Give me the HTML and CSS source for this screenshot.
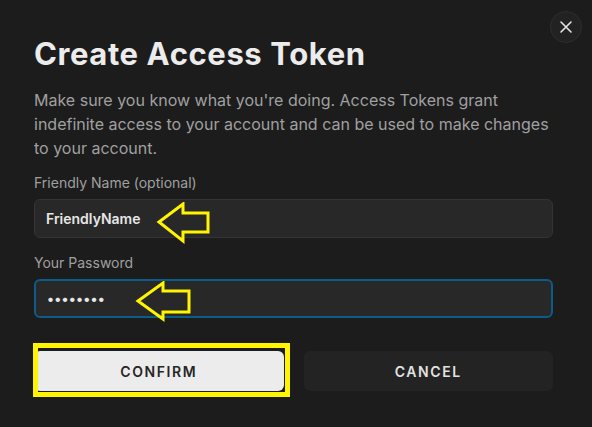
FILE: index.html
```html
<!DOCTYPE html>
<html>
<head>
<meta charset="utf-8">
<link rel="stylesheet" href="styles.css">
</head>
<body>
<div class="dialog">
  <button class="close" aria-label="Close">
    <svg width="14" height="14" viewBox="0 0 14 14"><path d="M2 2 L12 12 M12 2 L2 12" stroke="#e4e4e4" stroke-width="1.6" stroke-linecap="round" fill="none"/></svg>
  </button>
  <h1 class="title">Create Access Token</h1>
  <p class="desc">Make sure you know what you're doing. Access Tokens grant indefinite access to your account and can be used to make changes to your account.</p>
  <label class="label">Friendly Name (optional)</label>
  <input class="field" type="text" value="FriendlyName">
  <label class="label label-2">Your Password</label>
  <input class="field field-focus" type="password" value="password">
  <div class="actions">
    <button class="btn btn-confirm">CONFIRM</button>
    <button class="btn btn-cancel">CANCEL</button>
  </div>

  <svg class="arrow arrow-1" width="56" height="44" viewBox="0 0 56 44"><path d="M3 20 L27 2 L27 11 L52 11 L52 30 L27 30 L27 39 Z" fill="none" stroke="#fff500" stroke-width="3" stroke-linejoin="miter"/></svg>
  <svg class="arrow arrow-2" width="60" height="44" viewBox="0 0 60 44"><path d="M3 20 L28 2 L28 10 L54 10 L54 31 L28 31 L28 38 Z" fill="none" stroke="#fff500" stroke-width="3" stroke-linejoin="miter"/></svg>
  <div class="highlight"></div>
</div>
</body>
</html>
```
FILE: styles.css
```css
* { box-sizing: border-box; }
html, body {
  margin: 0;
  padding: 0;
  background: #1c1c1c;
  width: 592px;
  height: 427px;
  overflow: hidden;
}
body {
  font-family: Inter, "Noto Sans", sans-serif;
}
.dialog {
  position: relative;
  width: 592px;
  height: 427px;
  padding: 36px 39px 0 34px;
  display: flex;
  flex-direction: column;
}
.close {
  position: absolute;
  top: 11px;
  right: 10px;
  width: 32px;
  height: 32px;
  border-radius: 50%;
  background: #222222;
  border: 1px solid #2e2e2e;
  display: flex;
  align-items: center;
  justify-content: center;
  padding: 0;
}
.title {
  margin: 0;
  font-size: 31px;
  line-height: 36px;
  font-weight: 700;
  color: #ececec;
  letter-spacing: 0.6px;
}
.desc {
  margin: 16px 0 0 0;
  font-size: 16px;
  line-height: 24px;
  color: #a0a0a0;
}
.label {
  display: block;
  margin-top: 13px;
  font-size: 14px;
  line-height: 20px;
  color: #a0a0a0;
}
.label-2 { margin-top: 15px; }
.field {
  display: block;
  margin-top: 6px;
  width: 519px;
  height: 39px;
  border-radius: 6px;
  background: #282828;
  border: 1px solid #343434;
  padding: 0 11px;
  font-family: Inter, "Noto Sans", sans-serif;
  font-size: 14px;
  font-weight: 600;
  color: #e6e6e6;
  outline: none;
}
.field-focus {
  border: 2px solid #0d5c88;
  padding: 0 10px 0 11px;
  letter-spacing: 0.2px;
}
.actions {
  display: flex;
  gap: 20px;
  margin-top: 33px;
  width: 519px;
}
.btn {
  flex: 1;
  height: 40px;
  border: none;
  border-radius: 6px;
  font-family: Inter, "Noto Sans", sans-serif;
  font-size: 14px;
  font-weight: 600;
  letter-spacing: 1.6px;
}
.btn-confirm {
  background: #ececec;
  color: #262626;
}
.btn-cancel {
  background: #232323;
  color: #e2e2e2;
}
.arrow {
  position: absolute;
}
.arrow-1 { left: 156px; top: 202px; }
.arrow-2 { left: 135px; top: 281px; }
.highlight {
  position: absolute;
  left: 33px;
  top: 343px;
  width: 257px;
  height: 54px;
  border: 5px solid #fff500;
}
```
